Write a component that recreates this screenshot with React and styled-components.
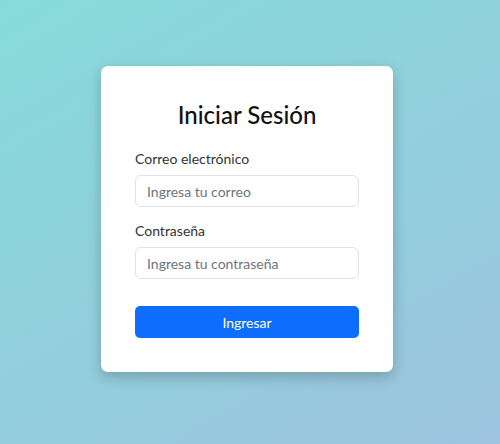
import React from 'react'
import styled, { createGlobalStyle } from 'styled-components';

const GlobalStyle = createGlobalStyle`
* { box-sizing: border-box; }
html, body { margin:0; padding:0; height:100%; }
body {
  font-family: "Segoe UI", Lato, "Noto Sans", sans-serif;
  color:#212529;
}
#root { height:100%; }
`;

function App() {
    return (
        <>
            <GlobalStyle />
            <Page>
                <Card>
                    <Title>Iniciar Sesión</Title>
                    <Field>
                        <Label>Correo electrónico</Label>
                        <Input type="email" placeholder="Ingresa tu correo" />
                    </Field>
                    <Field>
                        <Label>Contraseña</Label>
                        <Input type="password" placeholder="Ingresa tu contraseña" />
                    </Field>
                    <SubmitButton>Ingresar</SubmitButton>
                </Card>
            </Page>
        </>
    )
}

export default App

const Page = styled.div`
width:100%;
height:444px;
display:flex;
justify-content:center;
align-items:flex-start;
padding-top:66px;
padding-right:6px;
background:linear-gradient(150deg, #86dbda 0%, #91d0dc 50%, #9dc3e0 100%);
`;

const Card = styled.div`
width:292px;
background:#fff;
border-radius:7px;
padding:34px;
box-shadow:0 5px 14px rgba(0,0,0,0.22);
display:flex;
flex-direction:column;
`;

const Title = styled.h2`
margin:0 0 19px;
font-size:24px;
font-weight:500;
line-height:29px;
text-align:center;
color:#111;
`;

const Field = styled.div`
display:flex;
flex-direction:column;
margin-bottom:13px;
`;

const Label = styled.label`
font-size:14px;
line-height:21px;
margin-bottom:6px;
color:#333;
`;

const Input = styled.input`
height:32px;
border:1px solid #dee2e6;
border-radius:6px;
padding:0 11px;
font-family:inherit;
font-size:14px;
color:#212529;
outline:none;
&::placeholder { color:#6c757d; }
`;

const SubmitButton = styled.button`
margin-top:14px;
height:32px;
border:none;
border-radius:5px;
background:#0d6efd;
color:#fff;
font-family:inherit;
font-size:14px;
cursor:pointer;
`;
